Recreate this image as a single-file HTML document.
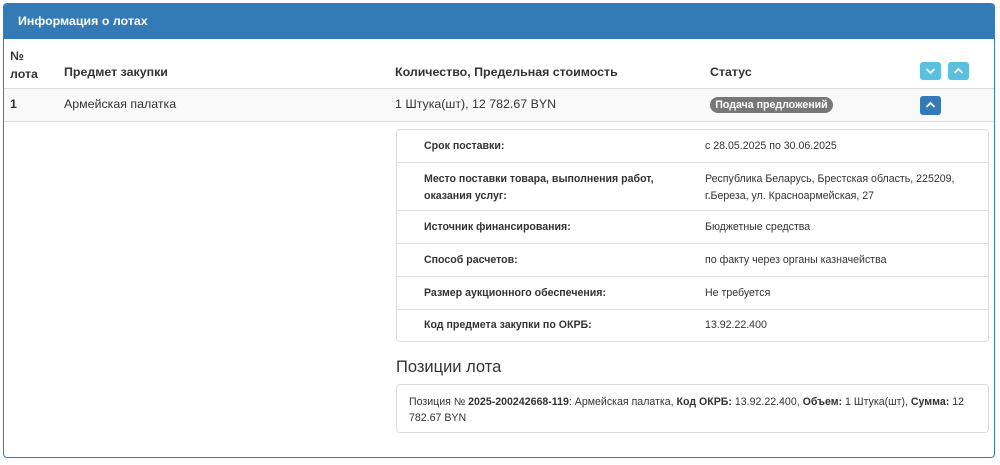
<!DOCTYPE html>
<html><head><meta charset="utf-8">
<style>
*{margin:0;padding:0;box-sizing:border-box}
body{width:1000px;height:465px;background:#fff;font-family:"Liberation Sans","DejaVu Sans",sans-serif;color:#333;position:relative;overflow:hidden}
.a{position:absolute;white-space:nowrap}
.panel{position:absolute;left:3px;top:3px;width:992px;height:455px;border:1px solid #337ab7;border-radius:4px;overflow:hidden}
.hd{position:absolute;left:0;top:0;width:100%;height:35px;background:#337ab7}
.b{font-weight:bold}
.btn{position:absolute;width:21px;height:18px;border-radius:3px;background:#5bc0de}
.btn svg{position:absolute;left:5px;top:5px}
.box{position:absolute;left:396px;width:593px;border:1px solid #ddd;border-radius:4px}
.ln{position:absolute;left:397px;width:591px;height:1px;background:#ddd}
.l{position:absolute;left:424px;font-size:10.6px;font-weight:bold;color:#333;line-height:17px}
.v{position:absolute;left:705px;font-size:10.6px;color:#333;line-height:17px}
.t{font-size:12.4px}
</style></head><body>
<div class="panel">
<div class="hd"></div>
<div class="a b" style="left:14px;top:10px;font-size:12.4px;color:#fff">Информация о лотах</div>
</div>
<div class="a b t" style="left:10px;top:47px;line-height:18px">№<br>лота</div>
<div class="a b t" style="left:64px;top:65px">Предмет закупки</div>
<div class="a b t" style="left:395px;top:65px">Количество, Предельная стоимость</div>
<div class="a b t" style="left:710px;top:65px">Статус</div>
<div class="btn" style="left:920px;top:62px"><svg width="11" height="8" viewBox="0 0 11 8"><path d="M1.5 2 L5.5 6 L9.5 2" fill="none" stroke="#fff" stroke-width="1.8"/></svg></div>
<div class="btn" style="left:948px;top:62px"><svg width="11" height="8" viewBox="0 0 11 8"><path d="M1.5 6 L5.5 2 L9.5 6" fill="none" stroke="#fff" stroke-width="1.8"/></svg></div>
<div class="a" style="left:4px;top:88px;width:990px;height:34px;background:#f9f9f9;border-top:1px solid #ddd;border-bottom:1px solid #ddd"></div>
<div class="a b t" style="left:10px;top:97px">1</div>
<div class="a t" style="left:64px;top:97px">Армейская палатка</div>
<div class="a t" style="left:395px;top:97px">1 Штука(шт), 12 782.67 BYN</div>
<div class="a b" style="left:710px;top:97px;width:123px;height:16px;border-radius:8px;background:#777;color:#fff;font-size:10.6px;line-height:16px;text-align:center">Подача предложений</div>
<div class="btn" style="left:920px;top:96px;background:#337ab7;height:19px"><svg width="11" height="8" viewBox="0 0 11 8"><path d="M1.5 6 L5.5 2 L9.5 6" fill="none" stroke="#fff" stroke-width="1.8"/></svg></div>

<div class="box" style="top:129px;height:213px"></div>
<div class="ln" style="top:162px"></div>
<div class="ln" style="top:210px"></div>
<div class="ln" style="top:243px"></div>
<div class="ln" style="top:276px"></div>
<div class="ln" style="top:309px"></div>
<div class="l" style="top:138px">Срок поставки:</div>
<div class="v" style="top:138px">с 28.05.2025 по 30.06.2025</div>
<div class="l" style="top:171px">Место поставки товара, выполнения работ,<br>оказания услуг:</div>
<div class="v" style="top:171px">Республика Беларусь, Брестская область, 225209,<br>г.Береза, ул. Красноармейская, 27</div>
<div class="l" style="top:219px">Источник финансирования:</div>
<div class="v" style="top:219px">Бюджетные средства</div>
<div class="l" style="top:252px">Способ расчетов:</div>
<div class="v" style="top:252px">по факту через органы казначейства</div>
<div class="l" style="top:285px">Размер аукционного обеспечения:</div>
<div class="v" style="top:285px">Не требуется</div>
<div class="l" style="top:317px">Код предмета закупки по ОКРБ:</div>
<div class="v" style="top:317px">13.92.22.400</div>

<div class="a" style="left:396px;top:358px;font-size:16.5px;color:#333">Позиции лота</div>
<div class="box" style="top:384px;height:49px"></div>
<div class="a" style="left:409px;top:394px;font-size:10.6px;line-height:16px">Позиция № <b>2025-200242668-119</b>: Армейская палатка, <b>Код ОКРБ:</b> 13.92.22.400, <b>Объем:</b> 1 Штука(шт), <b>Сумма:</b> 12<br>782.67 BYN</div>
</body></html>
